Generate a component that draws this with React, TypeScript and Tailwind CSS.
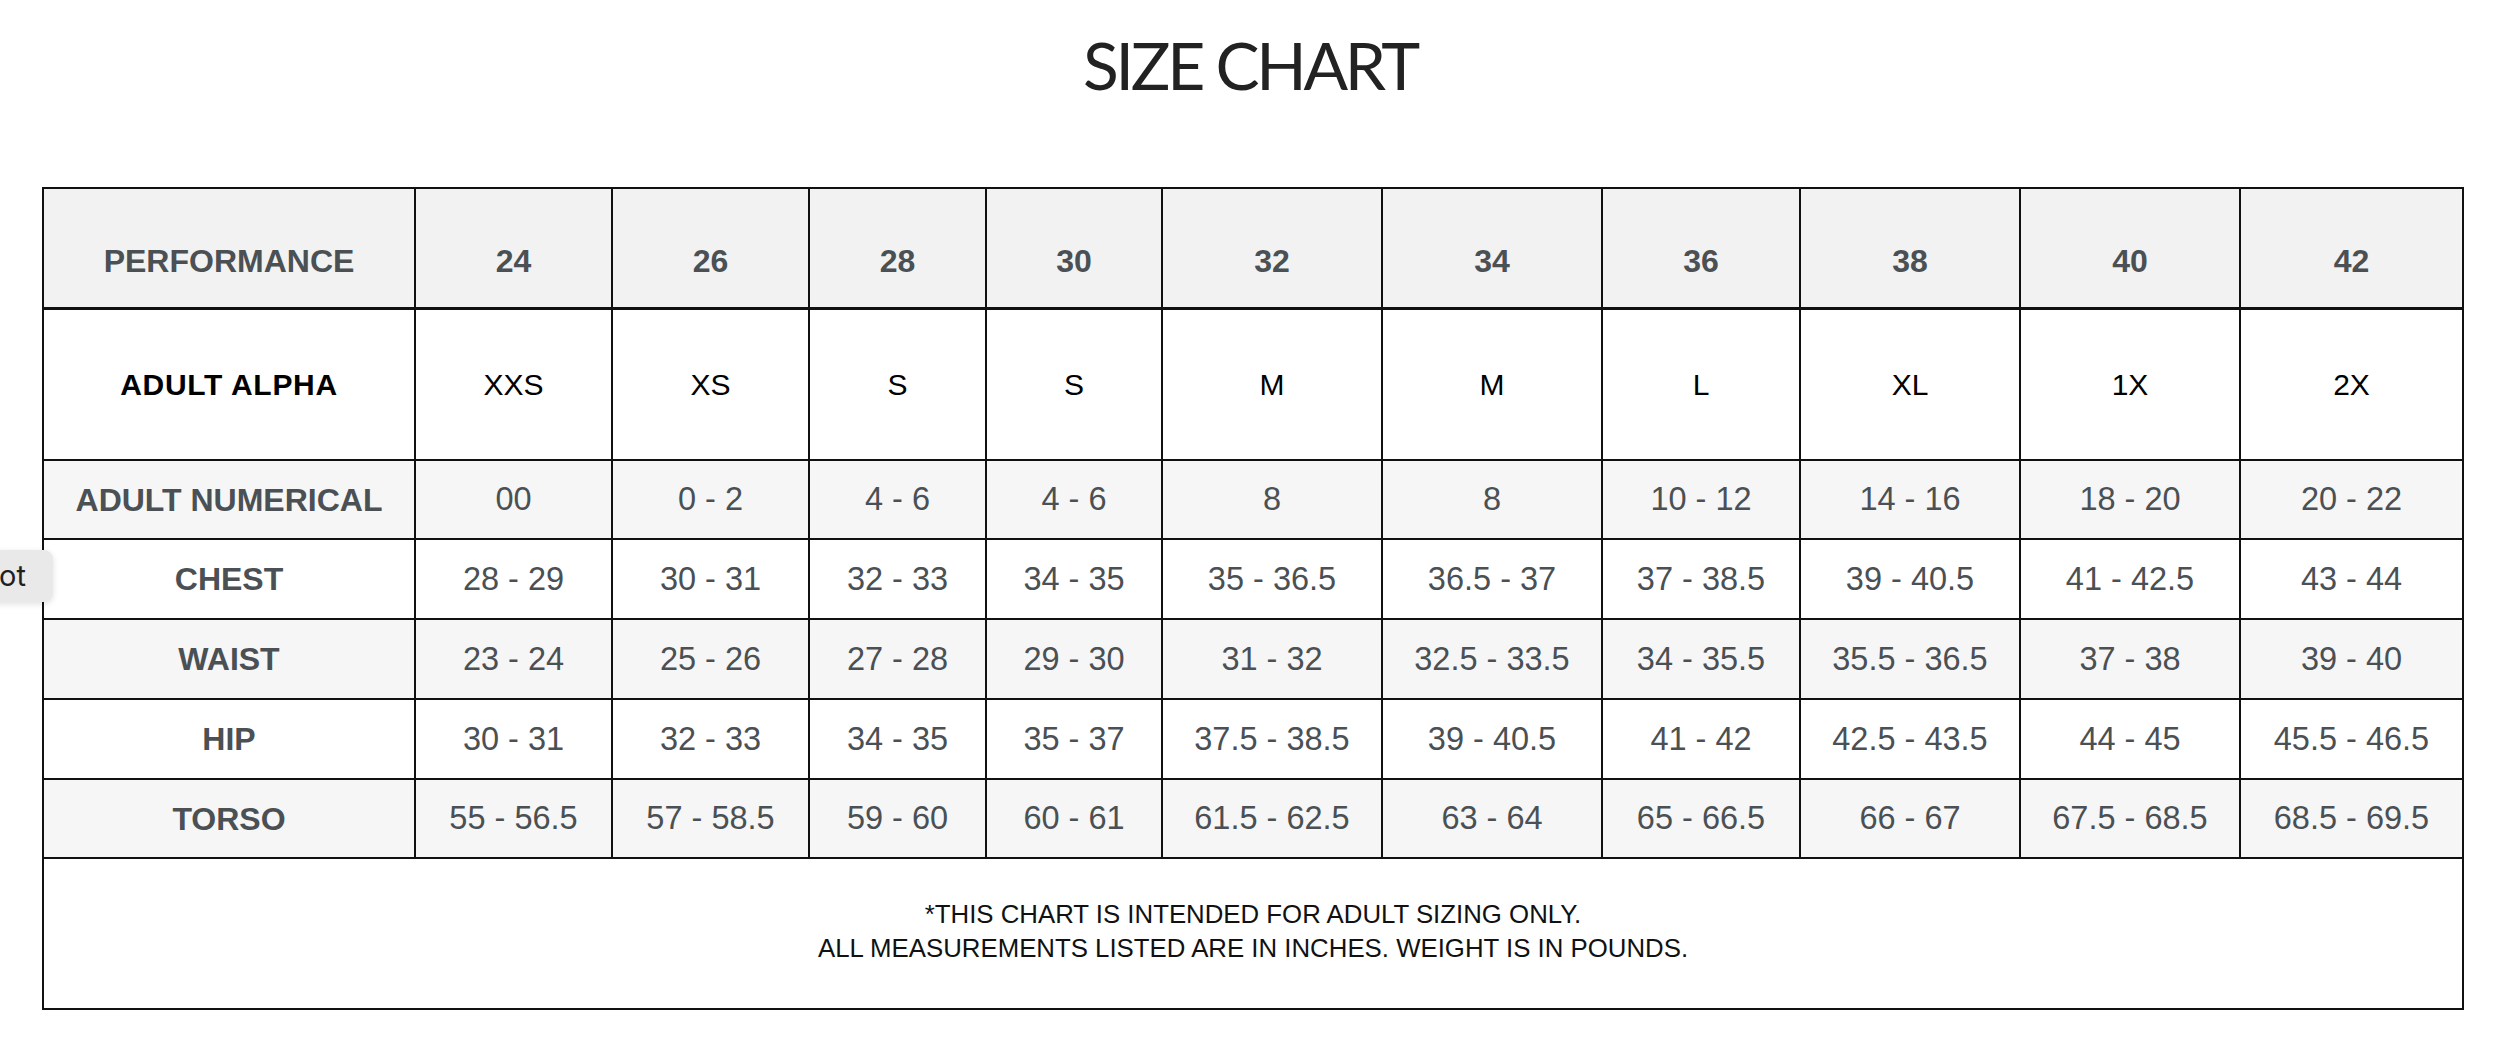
import React from "react";

const sizes = ["24", "26", "28", "30", "32", "34", "36", "38", "40", "42"];

const rows: { label: string; values: string[]; shaded: boolean; h: string }[] = [
  { label: "ADULT NUMERICAL", values: ["00", "0 - 2", "4 - 6", "4 - 6", "8", "8", "10 - 12", "14 - 16", "18 - 20", "20 - 22"], shaded: true, h: "h-[79px]" },
  { label: "CHEST", values: ["28 - 29", "30 - 31", "32 - 33", "34 - 35", "35 - 36.5", "36.5 - 37", "37 - 38.5", "39 - 40.5", "41 - 42.5", "43 - 44"], shaded: false, h: "h-[80px]" },
  { label: "WAIST", values: ["23 - 24", "25 - 26", "27 - 28", "29 - 30", "31 - 32", "32.5 - 33.5", "34 - 35.5", "35.5 - 36.5", "37 - 38", "39 - 40"], shaded: true, h: "h-[80px]" },
  { label: "HIP", values: ["30 - 31", "32 - 33", "34 - 35", "35 - 37", "37.5 - 38.5", "39 - 40.5", "41 - 42", "42.5 - 43.5", "44 - 45", "45.5 - 46.5"], shaded: false, h: "h-[80px]" },
  { label: "TORSO", values: ["55 - 56.5", "57 - 58.5", "59 - 60", "60 - 61", "61.5 - 62.5", "63 - 64", "65 - 66.5", "66 - 67", "67.5 - 68.5", "68.5 - 69.5"], shaded: true, h: "h-[79px]" },
];

const alpha = ["XXS", "XS", "S", "S", "M", "M", "L", "XL", "1X", "2X"];

export default function App() {
  return (
    <div className="relative min-h-[1047px] w-[2500px] overflow-hidden bg-white font-['Liberation_Sans',Arial,sans-serif]">
      <h1 className="pt-[32px] text-center font-['Lato',sans-serif] text-[66px] font-normal leading-none tracking-[-3.3px] text-[#222222]">
        SIZE CHART
      </h1>

      <div className="pl-[42px] pt-[89px]">
        <table className="w-[2420px] table-fixed border-collapse border-2 border-[#1a1a1a] text-center">
          <colgroup>
            <col className="w-[372px]" />
            <col className="w-[197px]" />
            <col className="w-[197px]" />
            <col className="w-[177px]" />
            <col className="w-[176px]" />
            <col className="w-[220px]" />
            <col className="w-[220px]" />
            <col className="w-[198px]" />
            <col className="w-[220px]" />
            <col className="w-[220px]" />
            <col className="w-[223px]" />
          </colgroup>
          <thead>
            <tr className="h-[120px] bg-[#f2f2f2]">
              <th className="border-2 border-b-[3px] border-[#111111] pt-[26px] align-middle text-[32px] font-bold text-[#4a5053]">
                PERFORMANCE
              </th>
              {sizes.map((s, i) => (
                <th
                  key={i}
                  className="border-2 border-b-[3px] border-[#111111] pt-[26px] align-middle text-[32px] font-bold text-[#4a5053]"
                >
                  {s}
                </th>
              ))}
            </tr>
          </thead>
          <tbody>
            <tr className="h-[152px] bg-white">
              <td className="border-2 border-t-[3px] border-[#111111] align-middle text-[30px] font-bold tracking-[0.7px] text-black">
                ADULT ALPHA
              </td>
              {alpha.map((a, i) => (
                <td key={i} className="border-2 border-t-[3px] border-[#111111] align-middle text-[30px] text-black">
                  {a}
                </td>
              ))}
            </tr>
            {rows.map((r) => (
              <tr key={r.label} className={`${r.h} ${r.shaded ? "bg-[#f6f6f6]" : "bg-white"}`}>
                <td className="border-2 border-[#111111] align-middle text-[32px] font-bold text-[#4a5053]">{r.label}</td>
                {r.values.map((v, i) => (
                  <td key={i} className="border-2 border-[#111111] align-middle text-[32.5px] text-[#4a5053]">
                    {v}
                  </td>
                ))}
              </tr>
            ))}
            <tr className="h-[151px] bg-white">
              <td colSpan={11} className="border-2 border-[#111111] pb-[6px] align-middle text-[25.8px] leading-[34px] text-[#111111]">
                *THIS CHART IS INTENDED FOR ADULT SIZING ONLY.
                <br />
                ALL MEASUREMENTS LISTED ARE IN INCHES. WEIGHT IS IN POUNDS.
              </td>
            </tr>
          </tbody>
        </table>
      </div>

      <div className="absolute left-[-12px] top-[550px] flex h-[52px] w-[65px] items-center justify-end rounded-[9px] bg-[#e9e9e9] pr-[27px] font-['Inter',sans-serif] text-[29px] text-[#1f1f1f] shadow-[0_2px_6px_rgba(0,0,0,0.12)]">
        ot
      </div>
    </div>
  );
}
